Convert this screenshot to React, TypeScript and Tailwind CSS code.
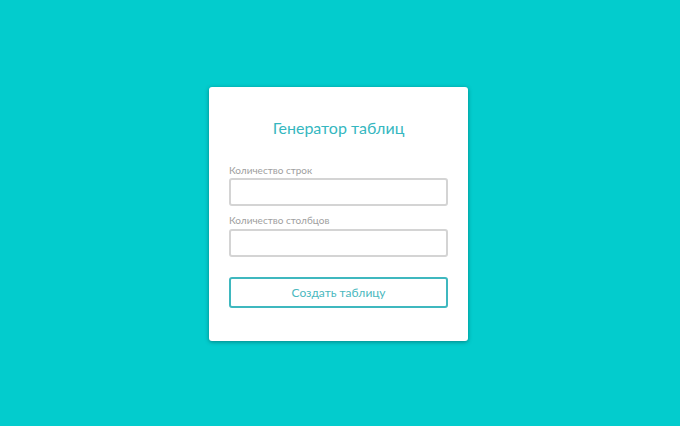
import React from "react";

const App = () => {
  return (
    <div
      className="w-full h-[426px] bg-[#03cccd] flex items-start justify-center pt-[87px] pr-[3px]"
      style={{ fontFamily: "Lato, 'Noto Sans', sans-serif" }}
    >
      {/* Card */}
      <div className="w-[259px] h-[254px] bg-white rounded-[3px] shadow-[0_1px_4px_rgba(0,0,0,0.35)] px-5 pt-[30px]">
        <h1 className="text-center text-[16px] leading-[22px] text-[#35b7c0]">
          Генератор таблиц
        </h1>

        <div className="mt-[24px] flex flex-col">
          <label className="text-[10px] leading-[14px] text-[#a0a0a0]">
            Количество строк
          </label>
          <input
            type="text"
            className="mt-[1px] h-[28px] w-full rounded-[3px] border-2 border-[#d4d4d4] outline-none"
          />

          <label className="mt-[7px] text-[10px] leading-[14px] text-[#a0a0a0]">
            Количество столбцов
          </label>
          <input
            type="text"
            className="mt-[2px] h-[28px] w-full rounded-[3px] border-2 border-[#d4d4d4] outline-none"
          />

          <button className="mt-[20px] h-[31px] w-full rounded-[3px] border-2 border-[#3fb8bf] bg-white text-[12px] text-[#4ab8be]">
            Создать таблицу
          </button>
        </div>
      </div>
    </div>
  );
};

export default App;
